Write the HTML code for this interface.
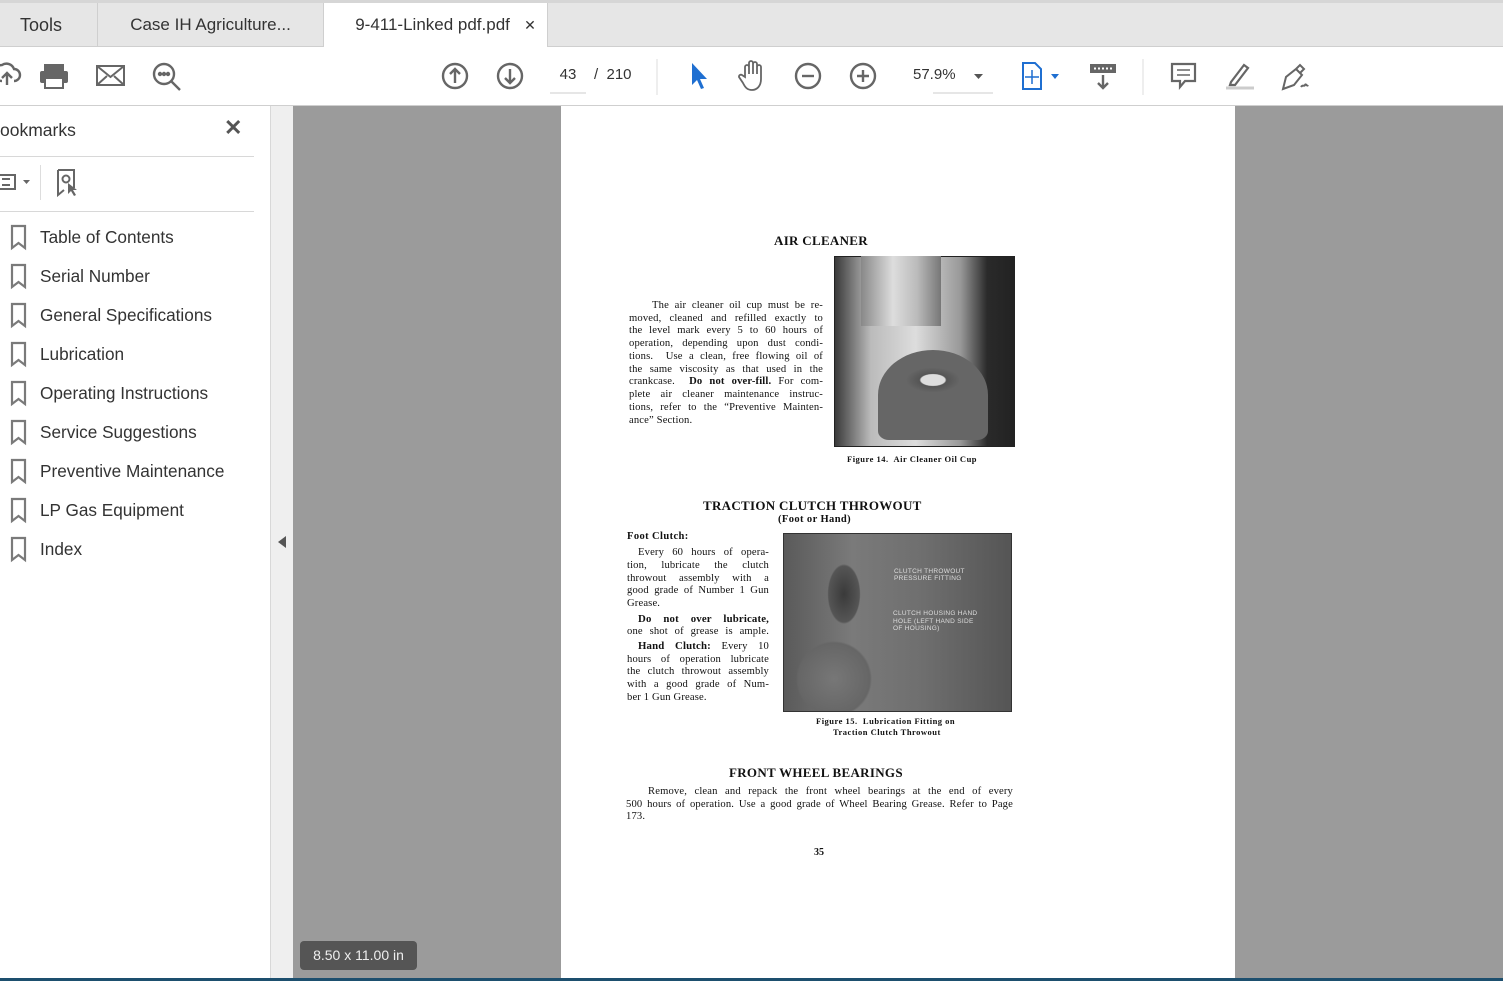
<!DOCTYPE html>
<html><head><meta charset="utf-8">
<style>
*{margin:0;padding:0;box-sizing:border-box}
body{width:1503px;height:981px;overflow:hidden;position:relative;background:#fff;font-family:"Liberation Sans",sans-serif;color:#333}
.a{position:absolute}
.tabbar{left:0;top:0;width:1503px;height:47px;background:#e6e6e6;border-top:3px solid #d6d6d6;border-bottom:1px solid #cfcfcf}
.tab{top:3px;height:44px;font-size:18px;line-height:44px;color:#333;text-align:center}
.toolbar{left:0;top:47px;width:1503px;height:59px;background:#fff;border-bottom:1px solid #cfcfcf}
.bm{font-size:17.2px;color:#333;left:40px}
.pg{font-family:"Liberation Serif",serif;color:#111;position:absolute}
.l{position:absolute;font-family:"Liberation Serif",serif;font-size:10.6px;letter-spacing:.15px;color:#111;text-align:justify;text-align-last:justify;white-space:nowrap;line-height:12px}
.nl{text-align-last:left}
.h{position:absolute;font-family:"Liberation Serif",serif;font-weight:bold;font-size:13px;color:#111;letter-spacing:.3px}
</style></head><body>
<div class="a tabbar"></div>
<div class="a tab" style="left:0;width:98px;border-right:1px solid #cfcfcf;text-align:left;padding-left:20px">Tools</div>
<div class="a tab" style="left:98px;width:225px;font-size:17px">Case IH Agriculture...</div>
<div class="a tab" style="left:323px;width:225px;background:#fff;height:45px;border-left:1px solid #cfcfcf;border-right:1px solid #cfcfcf;font-size:17px;padding-left:20px">9-411-Linked pdf.pdf&nbsp;&nbsp; <span style="font-size:14px">✕</span></div>
<div class="a toolbar"></div>
<svg class="a" style="left:0;top:47px" width="1503" height="59" fill="none" stroke="#666" stroke-width="2.4">
 <path d="M2 34 a8 8 0 0 1 0-16 a8 8 0 0 1 12 4 a6 6 0 0 1 0 12 M7 38 v-12 m-5 5 l5-5 5 5"/>
 <rect x="44" y="17" width="20" height="9" fill="#666" stroke="none"/>
 <rect x="40" y="24" width="28" height="12" rx="2" fill="#666" stroke="none"/>
 <rect x="45" y="31" width="18" height="10" fill="#fff" stroke="#666" stroke-width="2"/>
 <rect x="97" y="19" width="27" height="19" stroke-width="2"/><path d="M97 19 l13.5 11 13.5-11 M97 38 l10-9 M124 38 l-10-9" stroke-width="2"/>
 <circle cx="164" cy="27" r="10"/><path d="M171 34 l9 9"/><circle cx="160" cy="27" r="1" fill="#666"/><circle cx="164" cy="27" r="1" fill="#666"/><circle cx="168" cy="27" r="1" fill="#666"/>
 <circle cx="455" cy="29" r="12"/><path d="M455 36 v-14 m-5 5 l5-5 5 5"/>
 <circle cx="510" cy="29" r="12"/><path d="M510 22 v14 m-5-5 l5 5 5-5"/>
 <path d="M550 46 h36 M933 46 h60" stroke="#ccc" stroke-width="1"/>
 <path d="M657 12 v36 M1143 12 v36" stroke="#ddd" stroke-width="1"/>
 <path d="M692 16 v22 l5-5 4 9 3-1-4-9 h7 z" fill="#1f6fd1" stroke="none"/>
 <path d="M745 30 v-10 a2 2 0 0 1 4 0 v7 v-11 a2 2 0 0 1 4 0 v11 v-10 a2 2 0 0 1 4 0 v10 v-7 a2 2 0 0 1 4 0 v12 c0 7-4 11-9 11 c-5 0-7-3-9-7 l-4-6 a2 2 0 0 1 3-2 z" stroke-width="1.8"/>
 <circle cx="808" cy="29" r="12"/><path d="M802 29 h12"/>
 <circle cx="863" cy="29" r="12"/><path d="M857 29 h12 M863 23 v12"/>
 <path d="M974 27 h9 l-4.5 5 z" fill="#555" stroke="none"/>
 <path d="M1023 16 h12 l6 6 v20 h-18 z" stroke="#1f6fd1" stroke-width="2"/><path d="M1032 23 v14 M1025 30 h14" stroke="#1f6fd1" stroke-width="1.5"/>
 <path d="M1051 27 h8 l-4 5 z" fill="#1f6fd1" stroke="none"/>
 <rect x="1090" y="17" width="26" height="9" fill="#666" stroke="none"/><path d="M1094 21.5 h18" stroke="#fff" stroke-dasharray="2 2" stroke-width="2"/>
 <path d="M1103 28 v13 m-5-5 l5 5 5-5"/>
 <path d="M1172 17 h23 v17 h-10 l-5 6 v-6 h-8 z" stroke-width="2.2"/><path d="M1177 23 h13 M1177 28 h13" stroke-width="1.5"/>
 <path d="M1231 35 l13-17 4 3-13 17 h-5 z" stroke-width="2.2"/><path d="M1226 41 h28" stroke="#ccc" stroke-width="3"/>
 <path d="M1283 42 l3-12 10-8 6 6-8 10 z M1296 22 l4-4 4 4-4 4 M1301 40 c2-3 3 0 4-2 c1-2 2 2 3 0" stroke-width="2"/>
</svg>
<div class="a" style="left:550px;top:66px;width:36px;text-align:center;font-size:15px;color:#333">43</div>
<div class="a" style="left:594px;top:66px;font-size:15px;color:#333">/&nbsp; 210</div>
<div class="a" style="left:913px;top:66px;font-size:15px;color:#333">57.9%</div>

<div class="a" style="left:0;top:106px;width:271px;height:875px;background:#fff;border-right:1px solid #d8d8d8"></div>
<div class="a" style="left:0;top:120px;font-size:17.5px;color:#333">ookmarks</div>
<div class="a" style="left:224px;top:115px;font-size:22px;color:#555;font-weight:bold">✕</div>
<div class="a" style="left:0;top:156px;width:254px;height:1px;background:#d8d8d8"></div>
<div class="a" style="left:0;top:211px;width:254px;height:1px;background:#d8d8d8"></div>
<div class="a" style="left:40px;top:165px;width:1px;height:35px;background:#ddd"></div>
<svg class="a" style="left:0;top:165px" width="90" height="40" fill="none" stroke="#666" stroke-width="2">
 <rect x="-4" y="10" width="19" height="14"/><path d="M2 14 h8 M2 20 h8" /><path d="M23 15 h7 l-3.5 4 z" fill="#666" stroke="none"/>
 <path d="M58 5 h16 v18 M58 5 v25 l6-5" /><circle cx="66" cy="14" r="3.5"/><path d="M68 18 v11 l3-3 3 5 2-1-3-5 h4 z" fill="#666" stroke="none"/>
</svg>
<div class="a" style="left:271px;top:106px;width:22px;height:875px;background:#efefef"></div>
<svg class="a" style="left:277px;top:535px" width="10" height="14"><path d="M9 1 v12 l-8-6 z" fill="#555"/></svg>

<svg class="a" style="left:0;top:0" width="40" height="981">
 <g fill="none" stroke="#7a7a7a" stroke-width="2.2">
 <path d="M12 226 h13 v22 l-6.5-5 -6.5 5 z"/><path d="M12 265 h13 v22 l-6.5-5 -6.5 5 z"/><path d="M12 304 h13 v22 l-6.5-5 -6.5 5 z"/>
 <path d="M12 343 h13 v22 l-6.5-5 -6.5 5 z"/><path d="M12 382 h13 v22 l-6.5-5 -6.5 5 z"/><path d="M12 421 h13 v22 l-6.5-5 -6.5 5 z"/>
 <path d="M12 460 h13 v22 l-6.5-5 -6.5 5 z"/><path d="M12 499 h13 v22 l-6.5-5 -6.5 5 z"/><path d="M12 538 h13 v22 l-6.5-5 -6.5 5 z"/>
 </g></svg>
<div class="a bm" style="top:227px">Table of Contents</div>
<div class="a bm" style="top:266px">Serial Number</div>
<div class="a bm" style="top:305px">General Specifications</div>
<div class="a bm" style="top:344px">Lubrication</div>
<div class="a bm" style="top:383px">Operating Instructions</div>
<div class="a bm" style="top:422px">Service Suggestions</div>
<div class="a bm" style="top:461px">Preventive Maintenance</div>
<div class="a bm" style="top:500px">LP Gas Equipment</div>
<div class="a bm" style="top:539px">Index</div>

<div class="a" style="left:293px;top:106px;width:1210px;height:875px;background:#9b9b9b"></div>
<div class="a" style="left:561px;top:106px;width:674px;height:875px;background:#fff"></div>
<div class="a" style="left:0;top:978px;width:1503px;height:3px;background:#1d4f6e"></div>
<div class="a" style="left:300px;top:941px;width:117px;height:29px;background:#555;border-radius:4px;color:#eee;font-size:14px;line-height:29px;text-align:center">8.50 x 11.00 in</div>

<div class="h" style="left:774px;top:233px">AIR CLEANER</div>
<div class="a" style="left:834px;top:256px;width:181px;height:191px;background:linear-gradient(90deg,#3a3a3a 0,#bbb 20%,#ddd 45%,#999 70%,#2a2a2a 85%,#222 100%);border:1px solid #222"></div>
<div class="a" style="left:861px;top:256px;width:80px;height:70px;background:linear-gradient(90deg,#888,#ddd 40%,#bbb 70%,#777)"></div>
<div class="a" style="left:878px;top:350px;width:110px;height:90px;border-radius:50% 50% 10% 10%;background:radial-gradient(ellipse 30px 14px at 55px 30px,#ddd 40%,#555 45%,#666 90%),linear-gradient(#999,#ccc 60%,#888)"></div>
<div class="pg" style="left:847px;top:454px;font-size:8.5px;font-weight:bold;letter-spacing:.5px">Figure 14.&nbsp; Air Cleaner Oil Cup</div>

<div class="l" style="left:652px;top:300px;width:171px">The air cleaner oil cup must be re-</div>
<div class="l" style="left:629px;top:313px;width:194px">moved, cleaned and refilled exactly to</div>
<div class="l" style="left:629px;top:325px;width:194px">the level mark every 5 to 60 hours of</div>
<div class="l" style="left:629px;top:338px;width:194px">operation, depending upon dust condi-</div>
<div class="l" style="left:629px;top:351px;width:194px">tions.&nbsp; Use a clean, free flowing oil of</div>
<div class="l" style="left:629px;top:364px;width:194px">the same viscosity as that used in the</div>
<div class="l" style="left:629px;top:376px;width:194px">crankcase.&nbsp; <b>Do not over-fill.</b> For com-</div>
<div class="l" style="left:629px;top:389px;width:194px">plete air cleaner maintenance instruc-</div>
<div class="l" style="left:629px;top:402px;width:194px">tions, refer to the “Preventive Mainten-</div>
<div class="l nl" style="left:629px;top:415px;width:194px">ance” Section.</div>

<div class="h" style="left:703px;top:498px">TRACTION CLUTCH THROWOUT</div>
<div class="pg" style="left:778px;top:514px;font-size:10.5px;font-weight:bold;letter-spacing:.4px">(Foot or Hand)</div>
<div class="pg" style="left:627px;top:531px;font-size:10.5px;font-weight:bold;letter-spacing:.4px">Foot Clutch:</div>
<div class="l" style="left:638px;top:547px;width:131px">Every 60 hours of opera-</div>
<div class="l" style="left:627px;top:560px;width:142px">tion, lubricate the clutch</div>
<div class="l" style="left:627px;top:573px;width:142px">throwout assembly with a</div>
<div class="l" style="left:627px;top:585px;width:142px">good grade of Number 1 Gun</div>
<div class="l nl" style="left:627px;top:598px;width:142px">Grease.</div>
<div class="l" style="left:638px;top:613px;width:131px;font-weight:bold;font-size:10.8px">Do not over lubricate,</div>
<div class="l" style="left:627px;top:626px;width:142px">one shot of grease is ample.</div>
<div class="l" style="left:638px;top:640px;width:131px"><b style="font-size:10.8px">Hand Clutch:</b> Every 10</div>
<div class="l" style="left:627px;top:654px;width:142px">hours of operation lubricate</div>
<div class="l" style="left:627px;top:666px;width:142px">the clutch throwout assembly</div>
<div class="l" style="left:627px;top:679px;width:142px">with a good grade of Num-</div>
<div class="l nl" style="left:627px;top:692px;width:142px">ber 1 Gun Grease.</div>

<div class="a" style="left:783px;top:533px;width:229px;height:179px;background:radial-gradient(ellipse 22px 40px at 60px 60px,#3a3a3a,#555 70%,transparent 75%),radial-gradient(circle 40px at 50px 145px,#777,#666 90%,transparent 95%),linear-gradient(90deg,#5a5a5a,#7a7a7a 30%,#6f6f6f 60%,#555);border:1px solid #333"></div>
<div class="a" style="left:894px;top:568px;width:80px;height:14px;font-size:6.5px;line-height:7px;color:#ddd;letter-spacing:.3px">CLUTCH THROWOUT<br>PRESSURE FITTING</div>
<div class="a" style="left:893px;top:610px;width:110px;height:22px;font-size:6.5px;line-height:7.5px;color:#ddd;letter-spacing:.3px">CLUTCH HOUSING HAND<br>HOLE (LEFT HAND SIDE<br>OF HOUSING)</div>
<div class="pg" style="left:816px;top:716px;font-size:8.5px;font-weight:bold;letter-spacing:.5px">Figure 15.&nbsp; Lubrication Fitting on</div>
<div class="pg" style="left:833px;top:727px;font-size:8.5px;font-weight:bold;letter-spacing:.5px">Traction Clutch Throwout</div>

<div class="h" style="left:729px;top:765px">FRONT WHEEL BEARINGS</div>
<div class="l" style="left:648px;top:786px;width:365px">Remove, clean and repack the front wheel bearings at the end of every</div>
<div class="l" style="left:626px;top:799px;width:387px">500 hours of operation. Use a good grade of Wheel Bearing Grease. Refer to Page</div>
<div class="l nl" style="left:626px;top:811px;width:100px">173.</div>
<div class="pg" style="left:814px;top:847px;font-size:10px;font-weight:bold">35</div>
</body></html>
